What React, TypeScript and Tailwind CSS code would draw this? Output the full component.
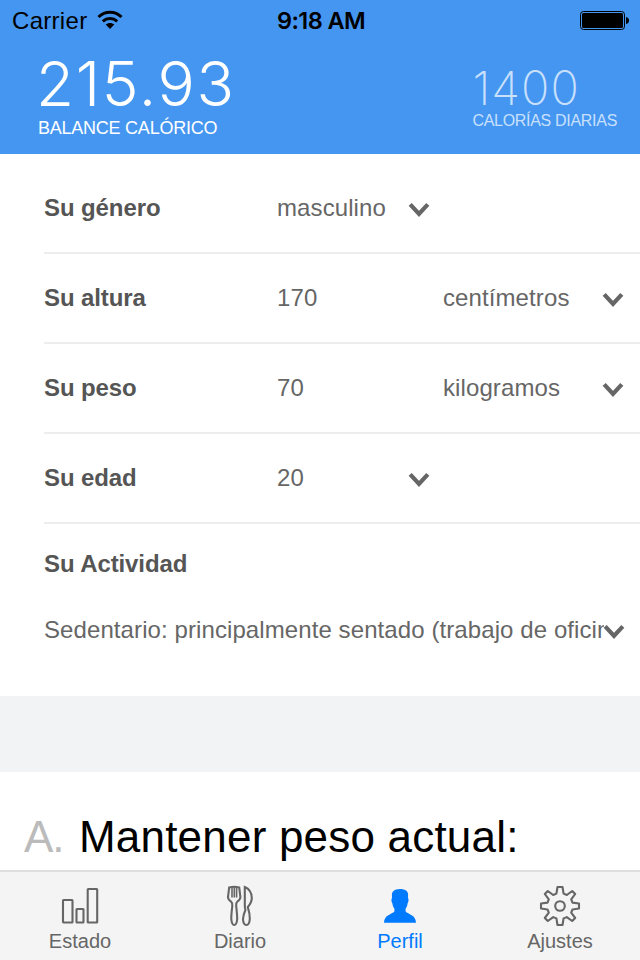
import type { ReactNode } from "react";

function Chevron() {
  return (
    <svg width="22" height="16" viewBox="0 0 22 16" fill="none" stroke="#666" strokeWidth="4.2" className="shrink-0">
      <path d="M2.2 2.4 L11 12 L19.8 2.4" />
    </svg>
  );
}

function Wifi() {
  return (
    <svg width="26" height="20" viewBox="0 0 26 20" fill="none" stroke="#000">
      <path d="M1.5 7 C8 0.7 18 0.7 24.5 7" strokeWidth="3.1" />
      <path d="M5.8 11.3 C10 7.6 16 7.6 20.2 11.3" strokeWidth="3.1" />
      <path d="M8.7 14.6 C11 12.5 15 12.5 17.3 14.6 L13 19 Z" fill="#000" stroke="none" />
    </svg>
  );
}

function Battery() {
  return (
    <svg width="50" height="20" viewBox="0 0 50 20">
      <rect x="0.5" y="1.5" width="44" height="18" rx="3" fill="none" stroke="#000" />
      <rect x="2" y="3" width="41" height="15" rx="1.5" fill="#000" />
      <path d="M46 7 Q49 7.5 49 10.5 Q49 13.5 46 14 Z" fill="#000" />
    </svg>
  );
}

function Row({ label, value, children }: { label: ReactNode; value: ReactNode; children?: ReactNode }) {
  return (
    <div className="ml-11 flex h-[90px] items-center border-b-2 border-[#ededed]">
      <div className="w-[233px] shrink-0 font-bold tracking-[-0.1px] text-[#555]">{label}</div>
      <div className="w-[131px] shrink-0 tracking-[0.1px]">{value}</div>
      {children}
    </div>
  );
}

function Unit({ children }: { children: ReactNode }) {
  return (
    <>
      <div className="ml-[35px] w-[159px] shrink-0 tracking-[0.1px]">{children}</div>
      <span className="mt-1"><Chevron /></span>
    </>
  );
}

function Tab({ icon, children, active }: { icon: ReactNode; children: ReactNode; active?: boolean }) {
  return (
    <div className={active ? "flex flex-1 flex-col items-center text-[#007aff]" : "flex flex-1 flex-col items-center text-[#666]"}>
      <svg width="44" height="44" viewBox="0 0 44 44" fill="none" stroke="currentColor" strokeWidth="2.1" className="mt-3 shrink-0">
        {icon}
      </svg>
      <div className="mt-px whitespace-nowrap text-[20px] leading-6">{children}</div>
    </div>
  );
}

export default function App() {
  return (
    <div className="flex h-[960px] w-[640px] flex-col overflow-hidden bg-white font-['Liberation_Sans',Arial,sans-serif] text-[24px] leading-7 text-[#666]">
      <header className="h-[154px] shrink-0 bg-[#4596f1]">
        <div className="flex h-10 items-center pl-3 pr-[10px] text-black">
          <div className="flex flex-1 items-center">
            <span className="mt-0.5 tracking-[0.3px]">Carrier</span>
            <span className="ml-2.5"><Wifi /></span>
          </div>
          <div className="mt-0.5 font-['Inter'] text-[23.5px] font-semibold tracking-[-0.6px]">9:18 AM</div>
          <div className="flex flex-1 justify-end"><Battery /></div>
        </div>
        <div className="flex justify-between pl-[38px] pr-[23px]">
          <div className="text-white">
            <div className="-ml-0.5 mt-[21px] font-['Inter'] text-[62px] font-light leading-[46px] tracking-[1.7px]">215.93</div>
            <div className="mt-[9px] text-[18px] leading-6 tracking-[-0.24px]">BALANCE CALÓRICO</div>
          </div>
          <div className="text-[#c8e0fc]">
            <div className="mt-[30px] font-['Inter'] text-[47px] font-extralight leading-[36px] tracking-[1px]">1400</div>
            <div className="mt-[7px] text-[16px] leading-4 tracking-[-0.3px]">CALORÍAS DIARIAS</div>
          </div>
        </div>
      </header>

      <main className="flex min-h-0 flex-1 flex-col">
        <section className="h-[542px] shrink-0 pt-[10px]">
          <Row label="Su género" value="masculino"><span className="mt-1"><Chevron /></span></Row>
          <Row label="Su altura" value="170"><Unit>centímetros</Unit></Row>
          <Row label="Su peso" value="70"><Unit>kilogramos</Unit></Row>
          <Row label="Su edad" value="20"><span className="mt-1"><Chevron /></span></Row>
          <div className="ml-11 mt-[26px] font-bold tracking-[-0.1px] text-[#555]">Su Actividad</div>
          <div className="ml-11 mt-[38px] flex items-center">
            <div className="w-[560px] shrink-0 overflow-hidden whitespace-nowrap tracking-[0.09px]">
              Sedentario: principalmente sentado (trabajo de oficina)
            </div>
            <span className="mt-1 -ml-px"><Chevron /></span>
          </div>
        </section>
        <div className="h-[76px] shrink-0 bg-[#f2f3f5]" />
        <section className="flex pl-6 pt-10 text-[44px] leading-[50px] text-black">
          <span className="w-[55px] tracking-[-1.2px] text-[#bbb]">A.</span>
          <h2 className="whitespace-nowrap tracking-[0.2px]">Mantener peso actual:</h2>
        </section>
      </main>

      <nav className="flex h-[90px] shrink-0 border-t-2 border-[#dedede] bg-[#f4f4f4]">
        <Tab icon={<>
          <rect x="5" y="16" width="9.5" height="22.5" rx="0.5" />
          <rect x="18.5" y="25" width="7" height="13.5" rx="0.5" />
          <rect x="29.7" y="5" width="9.5" height="33.5" rx="0.5" />
        </>}>Estado</Tab>
        <Tab icon={<>
          <path d="M11.2 3.4 L10 13 Q10 15.5 13 17.5 Q14.6 19 14.3 22 Q13.2 31 13.3 35 Q13.8 41 16.2 41 Q18.7 41 19.2 35 Q19.2 31 18.2 22 Q17.8 19 19.4 17.5 Q22.4 15.5 22.4 13 L21.2 3.4 Q16.2 2.2 11.2 3.4 Z" />
          <path d="M14 3 V13.4 M16.3 3 V13.4 M18.6 3 V13.4" strokeWidth="1.6" />
          <path d="M26.8 3 Q33.4 5.5 33.8 14 Q33.6 19 29.8 23 Q32 30 31.8 35 Q31.4 41 28.4 41 Q25.2 41 25 35 Q25.2 31 27.4 26 Q26.6 23 26.8 20 Z" />
        </>}>Diario</Tab>
        <Tab active icon={
          <path fill="currentColor" stroke="none" d="M22 5 C27 5 30.3 7 30.1 11 L30 14 C31 15 30.5 18.6 29.6 19.2 C29.4 21.5 28.8 23 27.6 24.5 V27.5 C30 30.5 37.8 30.5 38 38.8 H6 C6.2 30.5 14 30.5 16.4 27.5 V24.5 C15.2 23 14.6 21.5 14.4 19.2 C13.5 18.6 13 15 14 14 L13.9 11 C13.8 8 16 5 22 5 Z" />
        }>Perfil</Tab>
        <Tab icon={<>
          <path strokeLinejoin="round" d="M19.5 3 H24.5 L25.6 9.6 L28.8 11 L34.2 7 L37.2 10 L33.2 15.4 L34.5 18.6 L41 19.5 V24.5 L34.5 25.5 L33.2 28.7 L37.2 34 L34.2 37 L28.8 33.1 L25.6 34.4 L24.5 41 H19.5 L18.4 34.4 L15.2 33.1 L9.8 37 L6.8 34 L10.8 28.7 L9.5 25.5 L3 24.5 V19.5 L9.5 18.6 L10.8 15.4 L6.8 10 L9.8 7 L15.2 11 L18.4 9.6 Z" />
          <circle cx="22" cy="22" r="4.8" />
        </>}>Ajustes</Tab>
      </nav>
    </div>
  );
}
